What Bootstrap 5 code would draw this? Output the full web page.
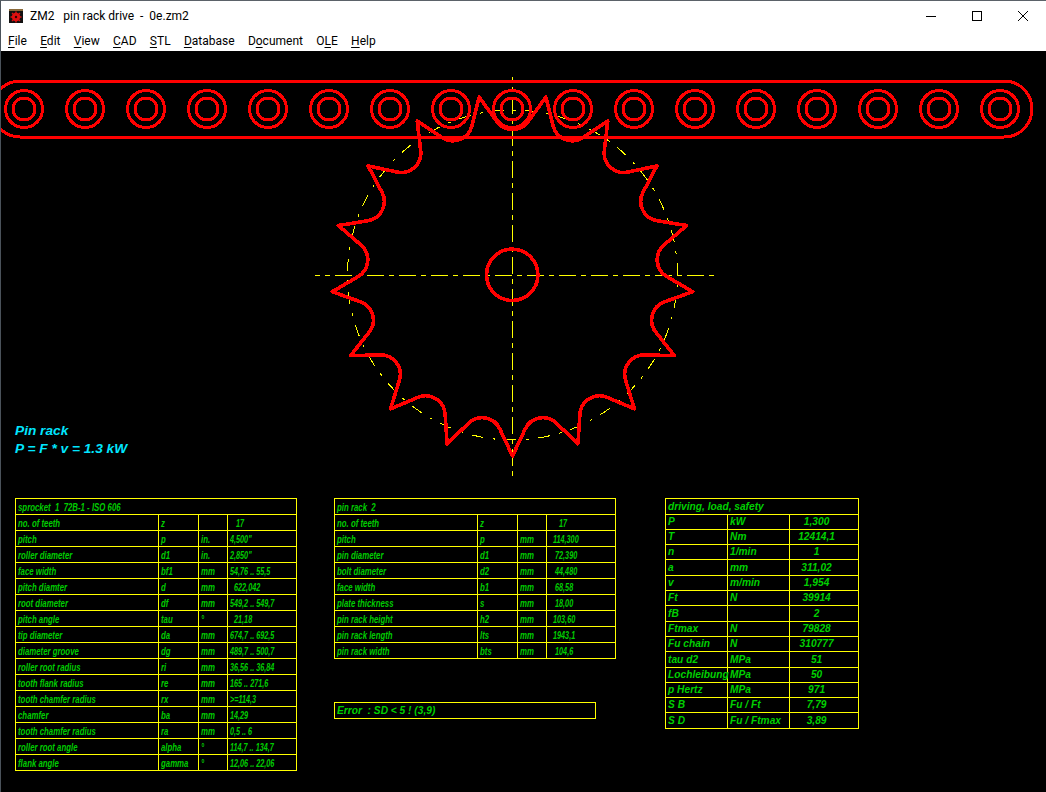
<!DOCTYPE html>
<html lang="en">
<head>
  <meta charset="UTF-8" />
  <title>ZM2 pin rack drive</title>
  <link href="https://cdn.jsdelivr.net/npm/bootstrap@5.3.2/dist/css/bootstrap.min.css" rel="stylesheet">
  <style>
    html, body { margin: 0; background: #000; overflow: hidden; }
    .app-window { width: 1046px; height: 792px; border-top: 1px solid #5b6269; border-left: 1px solid #4a525a; }
    .title-bar { height: 29px; background: #fff; font: 12px Roboto, sans-serif; color: #000; }
    .title-text { white-space: pre; margin-left: 7px; }
    .win-btn { width: 46px; height: 29px; }
    .menu-bar { height: 21px; background: #fff; font: 12px Roboto, sans-serif; color: #000; padding-left: 7px; gap: 13.3px; }
    .menu-bar span { white-space: nowrap; }
    .menu-bar u { text-underline-offset: 2px; }
    .canvas { background: #000; }
    .canvas svg { display: block; }
    .rack-note { left: 14px; top: 371px; color: #00e6ff; font: italic bold 13.7px/18px "Liberation Sans", sans-serif; }
    .tables { padding-left: 14px; }
    .cad { table-layout: fixed; border-collapse: collapse; margin: 0; --bs-table-bg: transparent; --bs-table-color: #00c800; --bs-table-border-color: #ff0; border-color: #ff0; }
    .cad td { padding: 1px 0 0 2px; height: 16px; line-height: 14px; white-space: pre; vertical-align: middle; box-shadow: none; border-width: 1px; color: #00cc00; background: transparent; }
    .cad.thin { width: 282px; font: italic bold 11.5px "Liberation Sans", sans-serif; }
    .cad.thin span { display: inline-block; transform: scaleX(.68); transform-origin: left center; }
    .cad.thin td:last-child span { transform: scaleX(.63); }
    .cad.thin td[colspan] span { transform: scaleX(.68); }
    .cad.wide { width: 194px; font: italic bold 10.2px "Liberation Sans", sans-serif; }
    .cad.wide td { height: 15px; padding: 0 0 0 2px; color: #00d000; }
    .cad.wide tr.tall td { height: 16px; }
    .cad.wide td.val { text-align: center; padding: 0 15px 0 0; }
    .rack-col { margin-left: 37px; }
    .drive-col { margin-left: 49px; }
    .error-box { width: 262px; height: 17px; border: 1px solid #ff0; margin-top: 43px; color: #00d000; font: italic bold 10.2px/15px "Liberation Sans", sans-serif; white-space: pre; padding-left: 2px; }
  </style>
</head>
<body>
  <div class="app-window d-flex flex-column">

    <!-- Title bar -->
    <div class="title-bar d-flex align-items-center">
      <svg class="ms-2 flex-shrink-0" width="14" height="14" viewBox="0 0 14 14">
        <rect width="14" height="14" fill="#111"/>
        <rect x="0" y="0" width="14" height="2" fill="#8a6a3a"/>
        <circle cx="7" cy="8" r="4.2" fill="#e01010"/>
        <path d="M7 2.5v11M1.5 8h11M3 4l8 8M11 4l-8 8" stroke="#e01010" stroke-width="1.4"/>
        <circle cx="7" cy="8" r="1.2" fill="#300"/>
      </svg>
      <span class="title-text">ZM2   pin rack drive  -  0e.zm2</span>
      <div class="ms-auto d-flex">
        <div class="win-btn d-flex align-items-center justify-content-center">
          <svg width="10" height="10"><path d="M0 5.5h10" stroke="#000"/></svg>
        </div>
        <div class="win-btn d-flex align-items-center justify-content-center">
          <svg width="10" height="10"><rect x=".5" y=".5" width="9" height="9" fill="none" stroke="#000"/></svg>
        </div>
        <div class="win-btn d-flex align-items-center justify-content-center">
          <svg width="10" height="10"><path d="M0 0l10 10M10 0L0 10" stroke="#000"/></svg>
        </div>
      </div>
    </div>

    <!-- Menu -->
    <div class="menu-bar d-flex align-items-center">
      <span><u>F</u>ile</span>
      <span><u>E</u>dit</span>
      <span><u>V</u>iew</span>
      <span><u>C</u>AD</span>
      <span><u>S</u>TL</span>
      <span><u>D</u>atabase</span>
      <span>D<u>o</u>cument</span>
      <span>O<u>L</u>E</span>
      <span><u>H</u>elp</span>
    </div>

    <!-- Drawing -->
    <div class="canvas flex-grow-1 position-relative">
      <svg id="drawing" width="1045" height="447" viewBox="1 51 1045 447" shape-rendering="crispEdges"></svg>
      <div class="rack-note position-absolute">Pin rack<br>P = F * v = 1.3 kW</div>

      <div class="tables d-flex align-items-start">
        <table class="cad thin table table-bordered" id="t1"></table>
        <div class="rack-col">
          <table class="cad thin table table-bordered" id="t2"></table>
          <div class="error-box">Error  : SD &lt; 5 ! (3,9)</div>
        </div>
        <div class="drive-col">
          <table class="cad wide table table-bordered" id="t3"></table>
        </div>
      </div>
    </div>
  </div>

  <script src="https://cdn.jsdelivr.net/npm/bootstrap@5.3.2/dist/js/bootstrap.bundle.min.js"></script>
  <script>
    // sprocket geometry, page coordinates
    const cx = 512.5, cy = 275, z = 17, rPitch = 165, rTip = 181, rRoller = 19.5;
    const RED = "#ff0000", YEL = "#ffff00";
    let svg = "";

    // centre lines and pitch circle go below the red parts
    svg += `<path d="M512.5 77V478M315 275.5H718" fill="none" stroke="${YEL}" stroke-dasharray="17 5 5 5" stroke-dashoffset="12"/>`;
    svg += `<circle cx="${cx}" cy="${cy}" r="${rPitch}" fill="none" stroke="${YEL}" stroke-dasharray="12 9 3 9.44" stroke-dashoffset="12.44"/>`;

    // chain plate and rollers
    svg += `<rect x="-8" y="81" width="1040" height="56" rx="28" fill="none" stroke="${RED}" stroke-width="3"/>`;
    for (let i = 0; i < 17; i++) {
      const x = 24 + i * 61;
      svg += `<circle cx="${x}" cy="109" r="18.5" fill="none" stroke="${RED}" stroke-width="3"/>`;
      svg += `<circle cx="${x}" cy="109" r="11" fill="none" stroke="${RED}" stroke-width="3"/>`;
    }

    // tooth outline: tip, straight flank, roller seat arc, flank, next tip
    const step = 2 * Math.PI / z;
    const polar = (r, a) => [cx + r * Math.cos(a), cy + r * Math.sin(a)];
    let d = "";
    for (let i = 0; i < z; i++) {
      const mid = -Math.PI / 2 + i * step;
      const c = polar(rPitch, mid);
      const t1 = polar(rTip, mid - step / 2), t2 = polar(rTip, mid + step / 2);
      const seat = tip => {
        const dx = tip[0] - c[0], dy = tip[1] - c[1], len = Math.hypot(dx, dy);
        const base = Math.atan2(dy, dx), off = Math.acos(rRoller / len);
        return [base, off];
      };
      const [b1, o1] = seat(t1), [b2, o2] = seat(t2);
      const p1 = [c[0] + rRoller * Math.cos(b1 - o1), c[1] + rRoller * Math.sin(b1 - o1)];
      const p2 = [c[0] + rRoller * Math.cos(b2 + o2), c[1] + rRoller * Math.sin(b2 + o2)];
      d += `${i ? "L" : "M"}${t1[0].toFixed(1)} ${t1[1].toFixed(1)}L${p1[0].toFixed(1)} ${p1[1].toFixed(1)}`;
      d += `A${rRoller} ${rRoller} 0 0 0 ${p2[0].toFixed(1)} ${p2[1].toFixed(1)}`;
      if (i === z - 1) d += "Z";
    }
    svg += `<path d="${d}" fill="none" stroke="${RED}" stroke-width="3.6" stroke-linejoin="round"/>`;
    svg += `<circle cx="512.2" cy="274.8" r="25.7" fill="none" stroke="${RED}" stroke-width="3.6"/>`;
    document.getElementById("drawing").innerHTML = svg;

    // tables
    const t1 = [
      ["no. of teeth", "z", "", "   17"],
      ["pitch", "p", "in.", '4,500"'],
      ["roller diameter", "d1", "in.", '2,850"'],
      ["face width", "bf1", "mm", "54,76 .. 55,5"],
      ["pitch diamter", "d", "mm", "  622,042"],
      ["root diameter", "df", "mm", "549,2 .. 549,7"],
      ["pitch angle", "tau", "°", "  21,18"],
      ["tip diameter", "da", "mm", "674,7 .. 692,5"],
      ["diameter groove", "dg", "mm", "489,7 .. 500,7"],
      ["roller root radius", "ri", "mm", "36,56 .. 36,84"],
      ["tooth flank radius", "re", "mm", "165 .. 271,6"],
      ["tooth chamfer radius", "rx", "mm", ">=114,3"],
      ["chamfer", "ba", "mm", "14,29"],
      ["tooth chamfer radius", "ra", "mm", "0,5 .. 6"],
      ["roller root angle", "alpha", "°", "114,7 .. 134,7"],
      ["flank angle", "gamma", "°", "12,06 .. 22,06"]
    ];
    const t2 = [
      ["no. of teeth", "z", "", "     17"],
      ["pitch", "p", "mm", "  114,300"],
      ["pin diameter", "d1", "mm", "   72,390"],
      ["bolt diameter", "d2", "mm", "   44,480"],
      ["face width", "b1", "mm", "   68,58"],
      ["plate thickness", "s", "mm", "   18,00"],
      ["pin rack height", "h2", "mm", "  103,60"],
      ["pin rack length", "lts", "mm", "  1943,1"],
      ["pin rack width", "bts", "mm", "   104,6"]
    ];
    const t3 = [
      ["P", "kW", "1,300"], ["T", "Nm", "12414,1"], ["n", "1/min", "1"], ["a", "mm", "311,02"],
      ["v", "m/min", "1,954"], ["Ft", "N", "39914"], ["fB", "", "2"], ["Ftmax", "N", "79828"],
      ["Fu chain", "N", "310777"], ["tau d2", "MPa", "51"], ["Lochleibung", "MPa", "50"], ["p Hertz", "MPa", "971"],
      ["S B", "Fu / Ft", "7,79"], ["S D", "Fu / Ftmax", "3,89"]
    ];

    function thinTable(id, title, rows, cols) {
      let html = "<colgroup>" + cols.map(w => `<col style="width:${w}px">`).join("") + "</colgroup>";
      html += `<tr><td colspan="4"><span>${title}</span></td></tr>`;
      rows.forEach(r => {
        html += "<tr>" + r.map(c => `<td><span>${c.replace("<", "&lt;").replace(">", "&gt;")}</span></td>`).join("") + "</tr>";
      });
      document.getElementById(id).innerHTML = html;
    }
    thinTable("t1", "sprocket  1  72B-1 - ISO 606", t1, [143, 40, 29, 69]);
    thinTable("t2", "pin rack  2", t2, [143, 40, 29, 69]);

    const tall = [0, 4, 7, 10, 14];
    let h3 = '<colgroup><col style="width:62px"><col style="width:62px"><col style="width:69px"></colgroup>';
    h3 += '<tr class="tall"><td colspan="3">driving, load, safety</td></tr>';
    t3.forEach((r, i) => {
      h3 += `<tr class="${tall.includes(i + 1) ? "tall" : ""}"><td>${r[0]}</td><td>${r[1]}</td><td class="val">${r[2]}</td></tr>`;
    });
    document.getElementById("t3").innerHTML = h3;
  </script>
</body>
</html>
